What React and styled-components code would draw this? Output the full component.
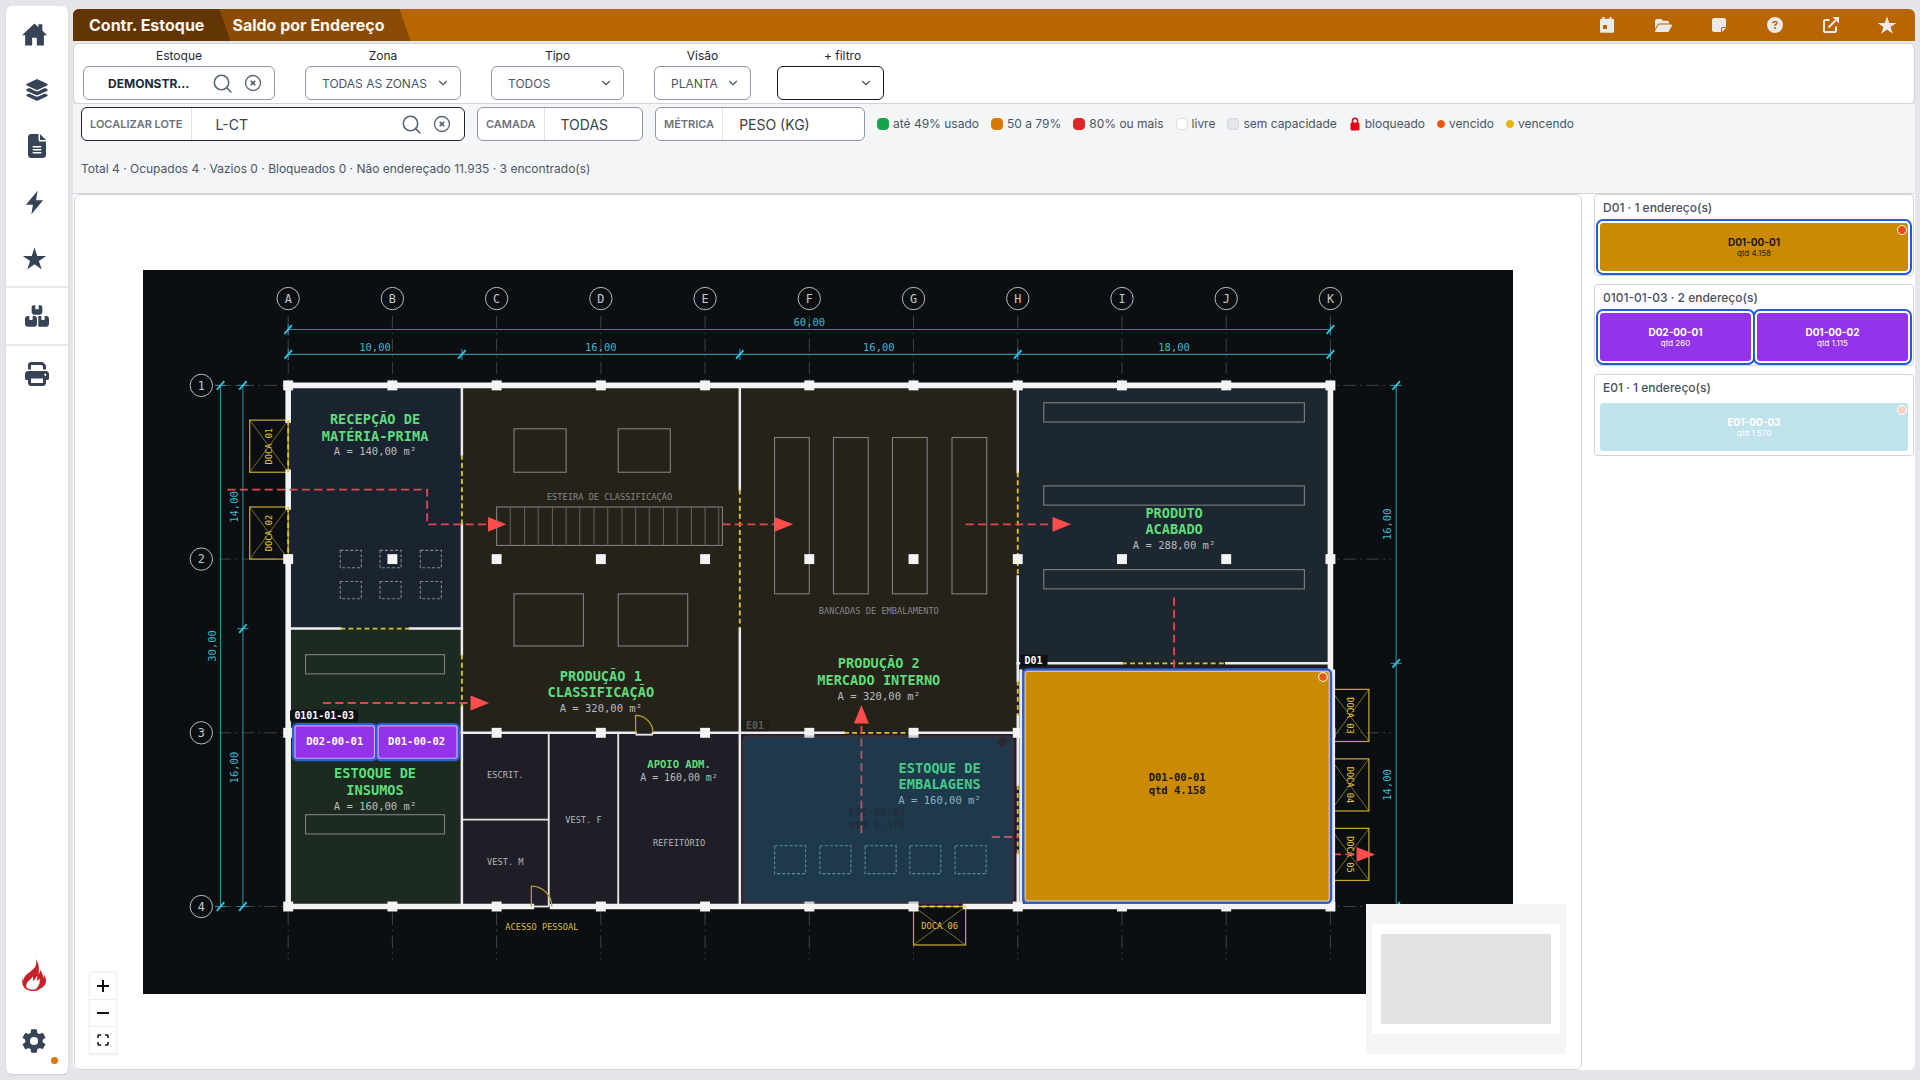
import React from "react";
import styled, { createGlobalStyle, css } from "styled-components";
import { ChevronDown } from "lucide-react";
import {
   FaLayerGroup,
   FaFileLines,
   FaBoxesStacked,
   FaPrint,
   FaFolderOpen,
   FaNoteSticky,
   FaCircleQuestion
} from "react-icons/fa6";
import { IoHomeSharp, IoFlashSharp, IoStarSharp, IoSettingsSharp } from "react-icons/io5";

const GlobalStyle = createGlobalStyle`
   * {
      box-sizing: border-box;
   }
   body {
      margin: 0;
      background: #e5e6ea;
      font-family: Inter, "Liberation Sans", sans-serif;
      color: #374151;
   }
   button, input, select {
      font-family: inherit;
      margin: 0;
   }
`;

const PageStyled = styled.div`
   display: flex;
   gap: 5px;
   height: 100vh;
   padding: 6px 5px 6px 6px;
`;

/* ---------- sidebar ---------- */

const SidebarStyled = styled.nav`
   display: flex;
   flex-direction: column;
   flex: none;
   width: 62px;
   background: #fff;
   border-radius: 6px;
   box-shadow: 0 1px 2px rgba(0, 0, 0, 0.12);
`;

const NavButton = styled.button`
   position: relative;
   display: flex;
   align-items: center;
   justify-content: center;
   height: ${(p) => (p.$tall ? 66 : 56)}px;
   padding: 0 ${(p) => (p.$shifted ? 6 : 0)}px 0 0;
   border: 0;
   background: none;
   color: #374357;
   cursor: pointer;
`;

const NavLine = styled.div`
   height: 2px;
   background: #e5e7eb;
`;

const NavSpacer = styled.div`
   flex: 1;
`;

const NavDot = styled.span`
   position: absolute;
   right: 10px;
   bottom: 10px;
   width: 7px;
   height: 7px;
   border-radius: 50%;
   background: #d97706;
`;

/* ---------- header ---------- */

const MainStyled = styled.main`
   display: flex;
   flex-direction: column;
   flex: 1;
   min-width: 0;
   padding: 3px 0 4px;
`;

const HeaderStyled = styled.header`
   display: flex;
   align-items: stretch;
   justify-content: space-between;
   height: 32px;
   flex: none;
   background: #b86504;
   border-radius: 6px 6px 0 0;
   overflow: hidden;
`;

const Tabs = styled.div`
   display: flex;
`;

const Tab = styled.a`
   display: flex;
   align-items: center;
   font-size: 16px;
   font-weight: 700;
   line-height: 20px;
   color: #fdf6ec;
   text-decoration: none;
   white-space: nowrap;
   clip-path: polygon(0 0, calc(100% - 11px) 0, 100% 100%, 0 100%);
   ${(p) =>
      p.$first
         ? css`
              z-index: 1;
              padding: 0 26px 0 16px;
              background: #633505;
           `
         : css`
              margin-left: -12px;
              padding: 0 26px 0 14px;
              background: #8a4c05;
           `}
`;

const HeaderActions = styled.div`
   display: flex;
`;

const HeaderButton = styled.button`
   display: flex;
   align-items: center;
   justify-content: center;
   width: 56px;
   padding: 0;
   border: 0;
   background: none;
   color: #eceae6;
   cursor: pointer;
`;

/* ---------- filters ---------- */

const FilterBar = styled.section`
   display: flex;
   align-items: flex-start;
   gap: 30px;
   margin-top: 2px;
   padding: 3px 8px 3px 9px;
   background: #fff;
   border: 1px solid #d1d5db;
   border-radius: 6px;
`;

const Field = styled.div`
   display: flex;
   flex-direction: column;
   gap: 1px;
   width: ${(p) => p.$width}px;
   ${(p) => p.$pull && "margin-left: -4px;"}

   label {
      font-size: 12px;
      line-height: 18px;
      text-align: center;
      color: #1f2937;
      padding-left: ${(p) => (p.$pull ? 24 : 0)}px;
   }
`;

const SelectWrap = styled.div`
   display: grid;
   align-items: center;
   color: #4b5563;

   select,
   svg {
      grid-area: 1 / 1;
   }
   svg {
      justify-self: end;
      margin-right: 11px;
      pointer-events: none;
   }
`;

const Select = styled.select`
   appearance: none;
   width: 100%;
   height: 34px;
   padding: 0 16px;
   font-size: 12px;
   color: #4b5563;
   background: #fff;
   border: 1px solid ${(p) => (p.$dark ? "#111827" : "#9096a8")};
   border-radius: 6px;
`;

const LookupBox = styled.div`
   display: flex;
   align-items: center;
   height: 34px;
   padding-right: 12px;
   background: #fff;
   border: 1px solid ${(p) => (p.$dark ? "#1f2430" : "#9096a8")};
   border-radius: 6px;
`;

const LookupInput = styled.input`
   flex: 1;
   min-width: 0;
   height: 100%;
   padding: 0 0 0 ${(p) => (p.$bold ? 24 : 0)}px;
   border: 0;
   outline: 0;
   background: none;
   font-size: ${(p) => (p.$bold ? 12 : 14)}px;
   font-weight: ${(p) => (p.$bold ? 700 : 400)};
   color: ${(p) => (p.$bold ? "#1f2937" : "#374151")};
`;

const IconButton = styled.button`
   display: flex;
   padding: 0;
   margin-left: 12px;
   border: 0;
   background: none;
   color: #5b6473;
   cursor: pointer;
`;

const ToolsStyled = styled.section`
   display: flex;
   align-items: center;
   gap: 12px;
   padding: 3px 8px 0;
   background: #f3f5f7;
`;

const TagBox = styled.div`
   display: flex;
   align-items: center;
   flex: none;
   width: ${(p) => p.$width}px;
   height: 34px;
   padding-right: 13px;
   background: #fff;
   border: 1px solid ${(p) => (p.$dark ? "#1f2430" : "#9096a8")};
   border-radius: 6px;

   label {
      display: flex;
      align-items: center;
      height: 100%;
      padding: 0 8px;
      margin-right: ${(p) => (p.$dark ? 24 : 16)}px;
      border-right: 1px solid #e0e2e8;
      font-size: 11px;
      font-weight: 600;
      color: #6b7280;
      white-space: nowrap;
   }
`;

const TagSelect = styled.select`
   appearance: none;
   flex: 1;
   min-width: 0;
   height: 100%;
   padding: 0;
   border: 0;
   background: none;
   font-size: 14px;
   color: #374151;
`;

const Legend = styled.ul`
   display: flex;
   flex-wrap: wrap;
   gap: 12px;
   margin: 0;
   padding: 0;
   list-style: none;
   font-size: 12px;
   line-height: 16px;
   color: #4b5563;
`;

const LegendItem = styled.li`
   display: flex;
   align-items: center;
   gap: 4px;
`;

const Swatch = styled.span`
   width: ${(p) => (p.$dot ? 8 : 12)}px;
   height: ${(p) => (p.$dot ? 8 : 12)}px;
   border-radius: ${(p) => (p.$dot ? "50%" : "4px")};
   background: ${(p) => p.$color};
   border: 1px solid ${(p) => p.$line || p.$color};
`;

const Summary = styled.p`
   margin: 0;
   padding: 20px 8px 16px;
   font-size: 12px;
   line-height: 16px;
   color: #4b5563;
   background: #f3f5f7;
`;

/* ---------- canvas ---------- */

const Workspace = styled.section`
   display: flex;
   gap: 12px;
   flex: 1;
   min-height: 0;
   background: #fff;
   border-top: 1px solid #d1d5db;
   border-radius: 0 0 6px 6px;
   padding: 0 1px;
`;

const Canvas = styled.div`
   position: relative;
   display: flex;
   align-items: center;
   justify-content: center;
   flex: 1;
   min-width: 0;
   border: 1px solid #d1d5db;
   border-radius: 6px;
   overflow: hidden;
`;

const PlanSvg = styled.svg`
   display: block;
   width: 91%;
   height: auto;
   background: #0b0f12;
   font-family: "DejaVu Sans Mono", monospace;
`;

const ZoomControls = styled.div`
   position: absolute;
   left: 15px;
   bottom: 15px;
   display: flex;
   flex-direction: column;
   box-shadow: 0 0 2px 1px rgba(0, 0, 0, 0.08);
`;

const ZoomButton = styled.button`
   display: flex;
   align-items: center;
   justify-content: center;
   width: 26px;
   height: 27px;
   padding: 0;
   border: 0;
   border-bottom: 1px solid #eee;
   background: #fefefe;
   color: #111;
   cursor: pointer;
`;

const MiniMap = styled.div`
   position: absolute;
   right: 15px;
   bottom: 15px;
   display: flex;
   width: 200px;
   height: 150px;
   padding: 20px 6px;
   background: #f5f5f5;
`;

const MiniView = styled.div`
   flex: 1;
   padding: 10px 9px;
   background: #fff;
`;

const MiniNode = styled.div`
   height: 100%;
   background: #e2e2e2;
`;

/* ---------- address list ---------- */

const AddressList = styled.aside`
   display: flex;
   flex-direction: column;
   gap: 8px;
   flex: none;
   width: 320px;
`;

const AddressCard = styled.article`
   padding: 0 4px 3px;
   border: 1px solid #d1d5db;
   border-radius: 4px;

   h2 {
      margin: 0;
      padding: 3px 4px 4px;
      font-size: 12px;
      line-height: 20px;
      font-weight: 500;
      color: #475061;
   }
`;

const AddressRow = styled.div`
   display: flex;
   gap: 4px;
`;

const AddressButton = styled.button`
   position: relative;
   flex: 1;
   height: 50px;
   padding: 0;
   border: 1px solid rgba(255, 255, 255, 0.5);
   border-radius: 4px;
   background: ${(p) => p.$fill};
   background-clip: padding-box;
   color: ${(p) => p.$ink};
   opacity: ${(p) => (p.$found ? 1 : 0.25)};
   box-shadow: ${(p) => (p.$found ? "0 0 0 1px #fff, 0 0 0 3px #1d5be0" : "none")};
   font-size: 10px;
   line-height: 12px;
   font-weight: 700;

   small {
      display: block;
      font-size: 8px;
      line-height: 10px;
      font-weight: 400;
   }
   i {
      position: absolute;
      top: 2px;
      right: 1px;
      width: 10px;
      height: 10px;
      border: 1px solid #fff;
      border-radius: 50%;
      background: #f04a0a;
   }
`;

/* ---------- icons ---------- */

const SearchIcon = () => (
   <svg width='20' height='20' viewBox='0 0 20 20' fill='none' stroke='currentColor' strokeWidth='1.6'>
      <circle cx='9.5' cy='9.5' r='7.2' />
      <path d='M14.6 14.6 19 19' strokeLinecap='round' />
   </svg>
);

const ClearIcon = () => (
   <svg width='18' height='18' viewBox='0 0 18 18' fill='none' stroke='currentColor'>
      <circle cx='9' cy='9' r='7.5' strokeWidth='1.3' />
      <path d='m6.8 6.8 4.4 4.4m0-4.4-4.4 4.4' strokeWidth='1.8' />
   </svg>
);

const FlameIcon = () => (
   <svg width='24' height='32' viewBox='0 0 24 32'>
      <path
         fill='#c4222a'
         d='M13.4 0c1.4 3 1.2 5.600-.6 8.300-2.900 4-8.300 6.200-10.600 10.400-2.700 5-.8 10.200 3.600 12.100-2-2.400-2-5.300-.2-7.700 1.500-2.100 4-3.200 5-5.700.9 1.500.7 3-.1 4.600 2.200-1 3.400-2.900 4.500-5.300.7 1.700.2 3.300-.5 4.900 1.300-.3 2.300-1 3.200-2.200.3 3.200-.1 6.200-2.100 8.600-1 1.300-2 2-3.600 2.800C18.500 31 24 27.500 24 21.800c0-2.600-.9-4.500-2-6.400 0 1.400-.2 2.500-.9 3.500.1-3.700-1.600-6.200-3.300-8.500.3 2-.1 3.500-1.300 5 .8-5.700.8-11-3.100-15.400Z'
      />
      <path
         fill='none'
         stroke='#c4222a'
         strokeWidth='1.4'
         d='M4.500 29.500c3.500 2.400 8.800 2.600 12.500.5'
      />
      <path fill='#c4222a' d='M1 18.600C-.8 23.500.4 28.300 5 31c-2.500-3.500-4-7.200-4-12.400Z' />
   </svg>
);

const CalendarIcon = () => (
   <svg width='16' height='16' viewBox='0 0 16 16' fill='currentColor'>
      <path
         fillRule='evenodd'
         d='M3.500 0h2v1.700h5V0h2v1.700h1.200c.7 0 1.300.6 1.300 1.300v11.500c0 .8-.6 1.300-1.300 1.300H2.300c-.7 0-1.300-.5-1.300-1.300V3c0-.7.6-1.300 1.300-1.300h1.200Zm.5 8v4h4V8Z'
      />
   </svg>
);

const ExternalIcon = () => (
   <svg width='16' height='16' viewBox='0 0 16 16' fill='none' stroke='currentColor' strokeWidth='2'>
      <path d='M6.500 3H2.600C1.700 3 1 3.700 1 4.600v8.800c0 .9.700 1.600 1.600 1.600h8.800c.9 0 1.600-.7 1.600-1.600V9.500M5.500 10.500 12.500 3.500' />
      <path d='M9.500 0H16v6.500Z' fill='currentColor' stroke='none' />
   </svg>
);

const LockIcon = () => (
   <svg width='12' height='14' viewBox='0 0 12 14'>
      <path d='M3.500 6V3.800a2.500 2.500 0 0 1 5 0V6' fill='none' stroke='#e1061a' strokeWidth='1.500' />
      <rect x='1.500' y='5.500' width='9' height='8' rx='1.500' fill='#e1061a' />
   </svg>
);

/* ---------- floor plan ---------- */

// drawing units for each metre of the building
const U = 28;
const m = (v) => Math.round(v * U);

const AXES = "ABCDEFGHIJK".split("");

const ROOMS = [
   [0, 0, 10, 14, "#1a2330"],
   [0, 14, 10, 16, "#1d2a20"],
   [10, 0, 16, 20, "#252219"],
   [26, 0, 16, 20, "#252219"],
   [42, 0, 18, 16, "#1c2730"],
   [42, 16, 18, 14, "#1f1e27"],
   [10, 20, 16, 10, "#1f1e27"],
   [26, 20, 16, 10, "#251c28"]
];

const OUTER_WALLS = [
   [0, 0, 60, 0],
   [0, 0, 0, 2],
   [0, 5, 0, 7],
   [0, 10, 0, 30],
   [0, 30, 14, 30],
   [15.2, 30, 36, 30],
   [39, 30, 60, 30],
   [60, 0, 60, 30]
];

const INNER_WALLS = [
   [10, 0, 10, 4],
   [10, 8, 10, 15.5],
   [10, 18.5, 10, 30],
   [0, 14, 3, 14],
   [7, 14, 10, 14],
   [26, 0, 26, 6],
   [26, 14, 26, 30],
   [10, 20, 20, 20],
   [21, 20, 32, 20],
   [36, 20, 42, 20],
   [42, 0, 42, 5],
   [42, 11, 42, 17],
   [42, 19, 42, 23],
   [42, 27, 42, 30],
   [42, 16, 48, 16],
   [54, 16, 60, 16]
];

const THIN_WALLS = [
   [15, 20, 15, 30],
   [19, 20, 19, 30],
   [10, 25, 15, 25],
   [20, 20.1, 21, 20.1],
   [14, 30, 15, 30]
];

const GATES = [
   [0, 2, 0, 5],
   [0, 7, 0, 10],
   [10, 4, 10, 8],
   [10, 15.5, 10, 18.5],
   [3, 14, 7, 14],
   [26, 6, 26, 14],
   [32, 20, 36, 20],
   [42, 5, 42, 11],
   [42, 17, 42, 19],
   [42, 23, 42, 27],
   [48, 16, 54, 16],
   [36, 30, 39, 30]
];

const FURNITURE = [
   [13, 2.5, 3, 2.5],
   [19, 2.5, 3, 2.5],
   [13, 12, 4, 3],
   [19, 12, 4, 3],
   [12, 7, 13, 2.2],
   [28, 3, 2, 9],
   [31.4, 3, 2, 9],
   [34.8, 3, 2, 9],
   [38.2, 3, 2, 9],
   [43.5, 1, 15, 1.1],
   [43.5, 5.8, 15, 1.1],
   [43.5, 10.6, 15, 1.1],
   [1, 15.5, 8, 1.1],
   [1, 24.7, 8, 1.1]
];

const PALLETS = [
   ...[3, 5.3, 7.6].flatMap((x) => [
      [x, 9.5, 1.2, 1],
      [x, 11.3, 1.2, 1]
   ]),
   ...[28, 30.6, 33.2, 35.8, 38.4].map((x) => [x, 26.5, 1.8, 1.6])
];

const DOCKS = [
   { name: "DOCA 01", x: -2.2, y: 2, w: 2.2, h: 3, turn: -90 },
   { name: "DOCA 02", x: -2.2, y: 7, w: 2.2, h: 3, turn: -90 },
   { name: "DOCA 03", x: 60, y: 17.5, w: 2.2, h: 3, turn: 90 },
   { name: "DOCA 04", x: 60, y: 21.5, w: 2.2, h: 3, turn: 90 },
   { name: "DOCA 05", x: 60, y: 25.5, w: 2.2, h: 3, turn: 90 },
   { name: "DOCA 06", x: 36, y: 30, w: 3, h: 2.2, turn: 0 }
];

const ROOM_LABELS = [
   { x: 5, y: 2.2, lines: ["RECEPÇÃO DE", "MATÉRIA-PRIMA"], area: "A = 140,00 m²" },
   { x: 18, y: 17, lines: ["PRODUÇÃO 1", "CLASSIFICAÇÃO"], area: "A = 320,00 m²" },
   { x: 34, y: 16.3, lines: ["PRODUÇÃO 2", "MERCADO INTERNO"], area: "A = 320,00 m²" },
   { x: 51, y: 7.6, lines: ["PRODUTO", "ACABADO"], area: "A = 288,00 m²" },
   { x: 5, y: 22.6, lines: ["ESTOQUE DE", "INSUMOS"], area: "A = 160,00 m²" },
   { x: 37.5, y: 22.3, lines: ["ESTOQUE DE", "EMBALAGENS"], area: "A = 160,00 m²" }
];

const SMALL_LABELS = [
   [12.5, 22.6, "ESCRIT.", "#b4b4ba"],
   [12.5, 27.6, "VEST. M", "#b4b4ba"],
   [17, 25.2, "VEST. F", "#b4b4ba"],
   [22.5, 26.5, "REFEITÓRIO", "#b4b4ba"],
   [18.5, 6.6, "ESTEIRA DE CLASSIFICAÇÃO", "#85858a"],
   [34, 13.15, "BANCADAS DE EMBALAMENTO", "#85858a"],
   [14.6, 31.35, "ACESSO PESSOAL", "#dcbc3a"]
];

const FLOWS = [
   { points: [[-3.5, 6], [8, 6], [8, 8], [11.5, 8]], turn: 0 },
   { points: [[25, 8], [28, 8]], turn: 0 },
   { points: [[39, 8], [44, 8]], turn: 0 },
   { points: [[2, 18.3], [10.5, 18.3]], turn: 0 },
   { points: [[33, 25.8], [33, 19.45]], turn: -90 },
   { points: [[51, 12.2], [51, 18]] },
   { points: [[40.5, 26], [44, 26]] },
   { points: [[58, 27], [61.5, 27]], turn: 0 }
];

// dir "h" puts the chain along x, "v" along y; at is the fixed coordinate
const DIMENSIONS = [
   { dir: "h", at: -3.2, stops: [0, 60] },
   { dir: "h", at: -1.8, stops: [0, 10, 26, 42, 60] },
   { dir: "v", at: -3.9, stops: [0, 30] },
   { dir: "v", at: -2.6, stops: [0, 14, 30] },
   { dir: "v", at: 63.8, stops: [0, 16, 30] }
];

function Lines({ items, ...rest }) {
   return (
      <g fill='none' {...rest}>
         {items.map(([x1, y1, x2, y2]) => (
            <line key={`${x1},${y1},${x2},${y2}`} x1={m(x1)} y1={m(y1)} x2={m(x2)} y2={m(y2)} />
         ))}
      </g>
   );
}

function Rects({ items, ...rest }) {
   return (
      <g {...rest}>
         {items.map(([x, y, w, h, fill]) => (
            <rect key={`${x},${y}`} x={m(x)} y={m(y)} width={m(w)} height={m(h)} fill={fill || "none"} />
         ))}
      </g>
   );
}

function AxisGrid() {
   return (
      <g fontSize='19' textAnchor='middle' fill='#c6c8cb'>
         <g stroke='#43474b' strokeWidth='1.5' strokeDasharray='20 7 3 7'>
            {AXES.map((a, i) => (
               <line key={a} x1={m(i * 6)} x2={m(i * 6)} y1={m(-4)} y2={m(33.1)} />
            ))}
            {[0, 10, 20, 30].map((y) => (
               <line key={y} x1={m(-4)} x2={m(63.5)} y1={m(y)} y2={m(y)} />
            ))}
         </g>
         {AXES.map((a, i) => (
            <g key={a} transform={`translate(${m(i * 6)} ${m(-5)})`}>
               <circle r='18' fill='none' stroke='#c6c8cb' strokeWidth='1.5' />
               <text y='7'>{a}</text>
            </g>
         ))}
         {[1, 2, 3, 4].map((n) => (
            <g key={n} transform={`translate(${m(-5)} ${m((n - 1) * 10)})`}>
               <circle r='18' fill='none' stroke='#c6c8cb' strokeWidth='1.5' />
               <text y='7'>{n}</text>
            </g>
         ))}
      </g>
   );
}

function Dimension({ dir, at, stops }) {
   const place = (v) => (dir === "h" ? [m(v), m(at)] : [m(at), m(v)]);
   const [x1, y1] = place(stops[0]);
   const [x2, y2] = place(stops[stops.length - 1]);
   return (
      <g>
         <line x1={x1} y1={y1} x2={x2} y2={y2} stroke='#2b8ca1' strokeWidth='1.8' />
         {stops.map((v) => {
            const [x, y] = place(v);
            return (
               <g key={v} transform={`translate(${x} ${y})`}>
                  <path d={dir === "h" ? "M0-9V9" : "M-9 0H9"} stroke='#2b8ca1' strokeWidth='1.8' />
                  <path d='M-6 7 6-7' stroke='#33c3e0' strokeWidth='3' />
               </g>
            );
         })}
         {stops.slice(1).map((v, i) => {
            const [x, y] = place((v + stops[i]) / 2);
            return (
               <text
                  key={v}
                  transform={`translate(${x} ${y})${dir === "v" ? " rotate(-90)" : ""}`}
                  y={dir === "v" ? -8 : -6}
                  fontSize='17'
                  textAnchor='middle'
                  fill='#3fb4cd'>
                  {(v - stops[i]).toFixed(2).replace(".", ",")}
               </text>
            );
         })}
      </g>
   );
}

function Dock({ name, x, y, w, h, turn }) {
   const [l, t, r, b] = [m(x), m(y), m(x + w), m(y + h)];
   return (
      <g stroke='#c2a832' fill='none'>
         <rect x={l} y={t} width={r - l} height={b - t} strokeWidth='2' />
         <path d={`M${l} ${t}L${r} ${b}M${r} ${t}L${l} ${b}`} strokeWidth='1' />
         <text
            transform={`translate(${(l + r) / 2} ${(t + b) / 2}) rotate(${turn})`}
            y='5'
            fontSize='14'
            textAnchor='middle'
            fill='#e3c23c'
            stroke='none'>
            {name}
         </text>
      </g>
   );
}

function Flow({ points, turn }) {
   const [ex, ey] = points[points.length - 1];
   return (
      <g>
         <polyline
            points={points.map(([x, y]) => `${m(x)},${m(y)}`).join(" ")}
            fill='none'
            stroke='#e0484c'
            strokeWidth='3'
            strokeDasharray='13 7'
         />
         {turn !== undefined && (
            <path d='M0-12 30 0 0 12Z' fill='#ff4d4d' transform={`translate(${m(ex)} ${m(ey)}) rotate(${turn})`} />
         )}
      </g>
   );
}

function Tag({ x, y, w, children }) {
   return (
      <g>
         <rect x={m(x)} y={m(y)} width={w} height='19' rx='3' fill='#0d1117' />
         <text x={m(x) + 7} y={m(y) + 15} fontSize='16' fontWeight='700' fill='#fff'>
            {children}
         </text>
      </g>
   );
}

function PlanCell({ x, y, w, h, fill, ink, lines, textX, textY, found, sides }) {
   const [l, t, r, b] = [m(x), m(y), m(x + w), m(y + h)];
   return (
      <g>
         {sides && <path d={`M${l - 4} ${t}V${b}M${r + 4} ${t}V${b}`} stroke='#ececf0' strokeWidth='5' />}
         <rect
            x={l}
            y={t}
            width={r - l}
            height={b - t}
            rx='7'
            fill={fill}
            stroke={found ? "#2a5fd8" : "#6b6b70"}
            strokeWidth='4'
         />
         {found && (
            <rect
               x={l + 3}
               y={t + 3}
               width={r - l - 6}
               height={b - t - 6}
               rx='4'
               fill='none'
               stroke='#d9d3e4'
               strokeOpacity='0.75'
               strokeWidth='2'
            />
         )}
         {lines.map((text, i) => (
            <text
               key={text}
               x={m(textX)}
               y={m(textY) + i * 20}
               fontSize='17'
               fontWeight='700'
               textAnchor='middle'
               fill={ink}>
               {text}
            </text>
         ))}
      </g>
   );
}

function FloorPlan() {
   return (
      <PlanSvg viewBox='-234 -186 2209 1166' role='img' aria-label='Planta do estoque'>
         <AxisGrid />
         <Rects items={ROOMS} />
         <Rects items={FURNITURE} stroke='#7e7f84' strokeWidth='1.8' />
         <g stroke='#5d5d60' strokeWidth='1.8'>
            {Array.from({ length: 16 }, (_, i) => 12.8 + i * 0.8).map((x) => (
               <line key={x} x1={m(x)} x2={m(x)} y1={m(7)} y2={m(9.2)} />
            ))}
         </g>
         <Rects items={PALLETS} stroke='#80868c' strokeWidth='1.8' strokeDasharray='5 3' />
         {DOCKS.map((d) => (
            <Dock key={d.name} {...d} />
         ))}
         <Lines items={THIN_WALLS} stroke='#e6e6e8' strokeWidth='3' />
         <Lines items={INNER_WALLS} stroke='#ececee' strokeWidth='4' strokeLinecap='square' />
         <Lines items={OUTER_WALLS} stroke='#f4f4f5' strokeWidth='9' strokeLinecap='square' />
         <Lines items={GATES} stroke='#dcc02e' strokeWidth='3' strokeDasharray='8 5' />
         <g fill='none' stroke='#b99b2c' strokeWidth='2'>
            <path d={`M${m(20)} ${m(20)}v-28a28 28 0 0 1 28 28`} />
            <path d={`M${m(14)} ${m(30)}v-33a33 33 0 0 1 33 33`} />
         </g>
         <g fill='#f4f4f5'>
            {[0, 10, 20, 30].map((y) =>
               AXES.map((a, i) => <rect key={a + y} x={m(i * 6) - 8} y={m(y) - 8} width='16' height='16' />)
            )}
         </g>
         {DIMENSIONS.map((d) => (
            <Dimension key={d.dir + d.at} {...d} />
         ))}
         {ROOM_LABELS.map(({ x, y, lines, area }) => (
            <g key={lines.join()} textAnchor='middle'>
               <g fontSize='22' fontWeight='700' fill='#5fdc7c'>
                  <text x={m(x)} y={m(y)}>
                     {lines[0]}
                  </text>
                  <text x={m(x)} y={m(y) + 27}>
                     {lines[1]}
                  </text>
               </g>
               <text x={m(x)} y={m(y) + 51} fontSize='17' fill='#b9bcc0'>
                  {area}
               </text>
            </g>
         ))}
         <g textAnchor='middle'>
            <text x={m(22.5)} y={m(22)} fontSize='17' fontWeight='700' fill='#5fdc7c'>
               APOIO ADM.
            </text>
            <text x={m(22.5)} y={m(22.8)} fontSize='16' fill='#b9bcc0'>
               A = 160,00 m²
            </text>
            {SMALL_LABELS.map(([x, y, text, fill]) => (
               <text key={text} x={m(x)} y={m(y)} fontSize='14' fill={fill}>
                  {text}
               </text>
            ))}
         </g>
         {FLOWS.map((f) => (
            <Flow key={f.points.join()} {...f} />
         ))}

         <g opacity='0.25'>
            <PlanCell
               x={26.2} y={20.2} w={15.5} h={9.6} fill='#0891b2' ink='#1b5b6e'
               lines={["E01-00-03", "qtd 1.570"]} textX={33.9} textY={24.8}
            />
            <circle cx={m(41.1)} cy={m(20.55)} r='7' fill='#4a4a48' />
            <Tag x={26.1} y={19.25} w={44}>E01</Tag>
         </g>
         <Tag x={0.1} y={18.67} w={110}>0101-01-03</Tag>
         <PlanCell
            x={0.27} y={19.5} w={4.8} h={2.07} fill='#9333ea' ink='#fff' found
            lines={["D02-00-01"]} textX={2.68} textY={20.7}
         />
         <PlanCell
            x={5.07} y={19.5} w={4.75} h={2.07} fill='#9333ea' ink='#fff' found
            lines={["D01-00-02"]} textX={7.38} textY={20.7}
         />
         <Tag x={42.15} y={15.5} w={44}>D01</Tag>
         <PlanCell
            x={42.32} y={16.35} w={17.7} h={13.45} fill='#ca8a04' ink='#1a1a14' found sides
            lines={["D01-00-01", "qtd 4.158"]} textX={51.17} textY={22.8}
         />
         <circle cx={m(59.58)} cy={m(16.77)} r='7' fill='#ea580c' stroke='#f7e3cf' strokeWidth='2' />
      </PlanSvg>
   );
}

/* ---------- page parts ---------- */

function Sidebar() {
   return (
      <SidebarStyled>
         <NavButton $shifted aria-label='Início'><IoHomeSharp size={25} /></NavButton>
         <NavButton aria-label='Módulos'><FaLayerGroup size={24} /></NavButton>
         <NavButton aria-label='Documentos'><FaFileLines size={24} /></NavButton>
         <NavButton $shifted aria-label='Ações'><IoFlashSharp size={25} /></NavButton>
         <NavButton $shifted aria-label='Favoritos'><IoStarSharp size={25} /></NavButton>
         <NavLine />
         <NavButton aria-label='Estoque'><FaBoxesStacked size={24} /></NavButton>
         <NavLine />
         <NavButton aria-label='Imprimir'><FaPrint size={24} /></NavButton>
         <NavSpacer />
         <NavButton $shifted $tall aria-label='Novidades'><FlameIcon /></NavButton>
         <NavButton $shifted $tall aria-label='Configurações'>
            <IoSettingsSharp size={26} />
            <NavDot />
         </NavButton>
      </SidebarStyled>
   );
}

function Header() {
   return (
      <HeaderStyled>
         <Tabs>
            <Tab $first href='#estoque'>Contr. Estoque</Tab>
            <Tab href='#saldo'>Saldo por Endereço</Tab>
         </Tabs>
         <HeaderActions>
            <HeaderButton aria-label='Calendário'><CalendarIcon /></HeaderButton>
            <HeaderButton aria-label='Abrir'><FaFolderOpen size={17} /></HeaderButton>
            <HeaderButton aria-label='Notas'><FaNoteSticky size={16} /></HeaderButton>
            <HeaderButton aria-label='Ajuda'><FaCircleQuestion size={16} /></HeaderButton>
            <HeaderButton aria-label='Nova janela'><ExternalIcon /></HeaderButton>
            <HeaderButton aria-label='Favoritar'><IoStarSharp size={20} /></HeaderButton>
         </HeaderActions>
      </HeaderStyled>
   );
}

function SelectField({ id, label, value, width, last }) {
   return (
      <Field $width={width} $pull={last}>
         <label htmlFor={id}>{label}</label>
         <SelectWrap>
            <Select id={id} $dark={last}>
               <option>{value}</option>
            </Select>
            <ChevronDown size={14} />
         </SelectWrap>
      </Field>
   );
}

function Filters() {
   return (
      <FilterBar>
         <Field $width={192}>
            <label htmlFor='estoque'>Estoque</label>
            <LookupBox>
               <LookupInput $bold id='estoque' defaultValue='DEMONSTR...' />
               <IconButton aria-label='Buscar'><SearchIcon /></IconButton>
               <IconButton aria-label='Limpar'><ClearIcon /></IconButton>
            </LookupBox>
         </Field>
         <SelectField id='zona' label='Zona' value='TODAS AS ZONAS' width={156} />
         <SelectField id='tipo' label='Tipo' value='TODOS' width={133} />
         <SelectField id='visao' label='Visão' value='PLANTA' width={97} />
         <SelectField id='filtro' label='+ filtro' value='' width={107} last />
      </FilterBar>
   );
}

function Tools() {
   return (
      <ToolsStyled>
         <TagBox $width={384} $dark>
            <label htmlFor='lote'>LOCALIZAR LOTE</label>
            <LookupInput id='lote' defaultValue='L-CT' />
            <IconButton aria-label='Buscar lote'><SearchIcon /></IconButton>
            <IconButton aria-label='Limpar lote'><ClearIcon /></IconButton>
         </TagBox>
         <TagBox $width={166}>
            <label htmlFor='camada'>CAMADA</label>
            <TagSelect id='camada'><option>TODAS</option></TagSelect>
         </TagBox>
         <TagBox $width={210}>
            <label htmlFor='metrica'>MÉTRICA</label>
            <TagSelect id='metrica'><option>PESO (KG)</option></TagSelect>
         </TagBox>
         <Legend>
            <LegendItem><Swatch $color='#16a34a' />até 49% usado</LegendItem>
            <LegendItem><Swatch $color='#d97706' />50 a 79%</LegendItem>
            <LegendItem><Swatch $color='#dc2626' />80% ou mais</LegendItem>
            <LegendItem><Swatch $color='#fff' $line='#d9dce1' />livre</LegendItem>
            <LegendItem><Swatch $color='#e5e7eb' $line='#d1d5db' />sem capacidade</LegendItem>
            <LegendItem><LockIcon />bloqueado</LegendItem>
            <LegendItem><Swatch $dot $color='#ea580c' />vencido</LegendItem>
            <LegendItem><Swatch $dot $color='#eab308' />vencendo</LegendItem>
         </Legend>
      </ToolsStyled>
   );
}

const ADDRESSES = [
   { title: "D01 · 1 endereço(s)", cells: [{ code: "D01-00-01", qty: "qtd 4.158", fill: "#ca8a04", ink: "#1f1a0c", found: true, expired: true }] },
   {
      title: "0101-01-03 · 2 endereço(s)",
      cells: [
         { code: "D02-00-01", qty: "qtd 260", fill: "#9333ea", ink: "#fff", found: true },
         { code: "D01-00-02", qty: "qtd 1.115", fill: "#9333ea", ink: "#fff", found: true }
      ]
   },
   { title: "E01 · 1 endereço(s)", cells: [{ code: "E01-00-03", qty: "qtd 1.570", fill: "#0891b2", ink: "#fff", expired: true }] }
];

function Addresses() {
   return (
      <AddressList>
         {ADDRESSES.map(({ title, cells }) => (
            <AddressCard key={title}>
               <h2>{title}</h2>
               <AddressRow>
                  {cells.map((c) => (
                     <AddressButton key={c.code} $fill={c.fill} $ink={c.ink} $found={c.found}>
                        {c.code}
                        <small>{c.qty}</small>
                        {c.expired && <i />}
                     </AddressButton>
                  ))}
               </AddressRow>
            </AddressCard>
         ))}
      </AddressList>
   );
}

function App() {
   return (
      <PageStyled>
         <GlobalStyle />
         <Sidebar />
         <MainStyled>
            <Header />
            <Filters />
            <Tools />
            <Summary>
               Total 4 · Ocupados 4 · Vazios 0 · Bloqueados 0 · Não endereçado 11.935 · 3 encontrado(s)
            </Summary>
            <Workspace>
               <Canvas>
                  <FloorPlan />
                  <ZoomControls>
                     <ZoomButton aria-label='Aproximar'>
                        <svg width='12' height='12' viewBox='0 0 12 12' stroke='currentColor' strokeWidth='2'><path d='M6 0v12M0 6h12' /></svg>
                     </ZoomButton>
                     <ZoomButton aria-label='Afastar'>
                        <svg width='12' height='12' viewBox='0 0 12 12' stroke='currentColor' strokeWidth='2'><path d='M0 6h12' /></svg>
                     </ZoomButton>
                     <ZoomButton aria-label='Ajustar à tela'>
                        <svg width='12' height='12' viewBox='0 0 12 12' fill='none' stroke='currentColor' strokeWidth='1.600'>
                           <path d='M1 4V2q0-1 1-1h2M8 1h2q1 0 1 1v2M11 8v2q0 1-1 1H8M4 11H2q-1 0-1-1V8' />
                        </svg>
                     </ZoomButton>
                  </ZoomControls>
                  <MiniMap>
                     <MiniView>
                        <MiniNode />
                     </MiniView>
                  </MiniMap>
               </Canvas>
               <Addresses />
            </Workspace>
         </MainStyled>
      </PageStyled>
   );
}

export default App;
